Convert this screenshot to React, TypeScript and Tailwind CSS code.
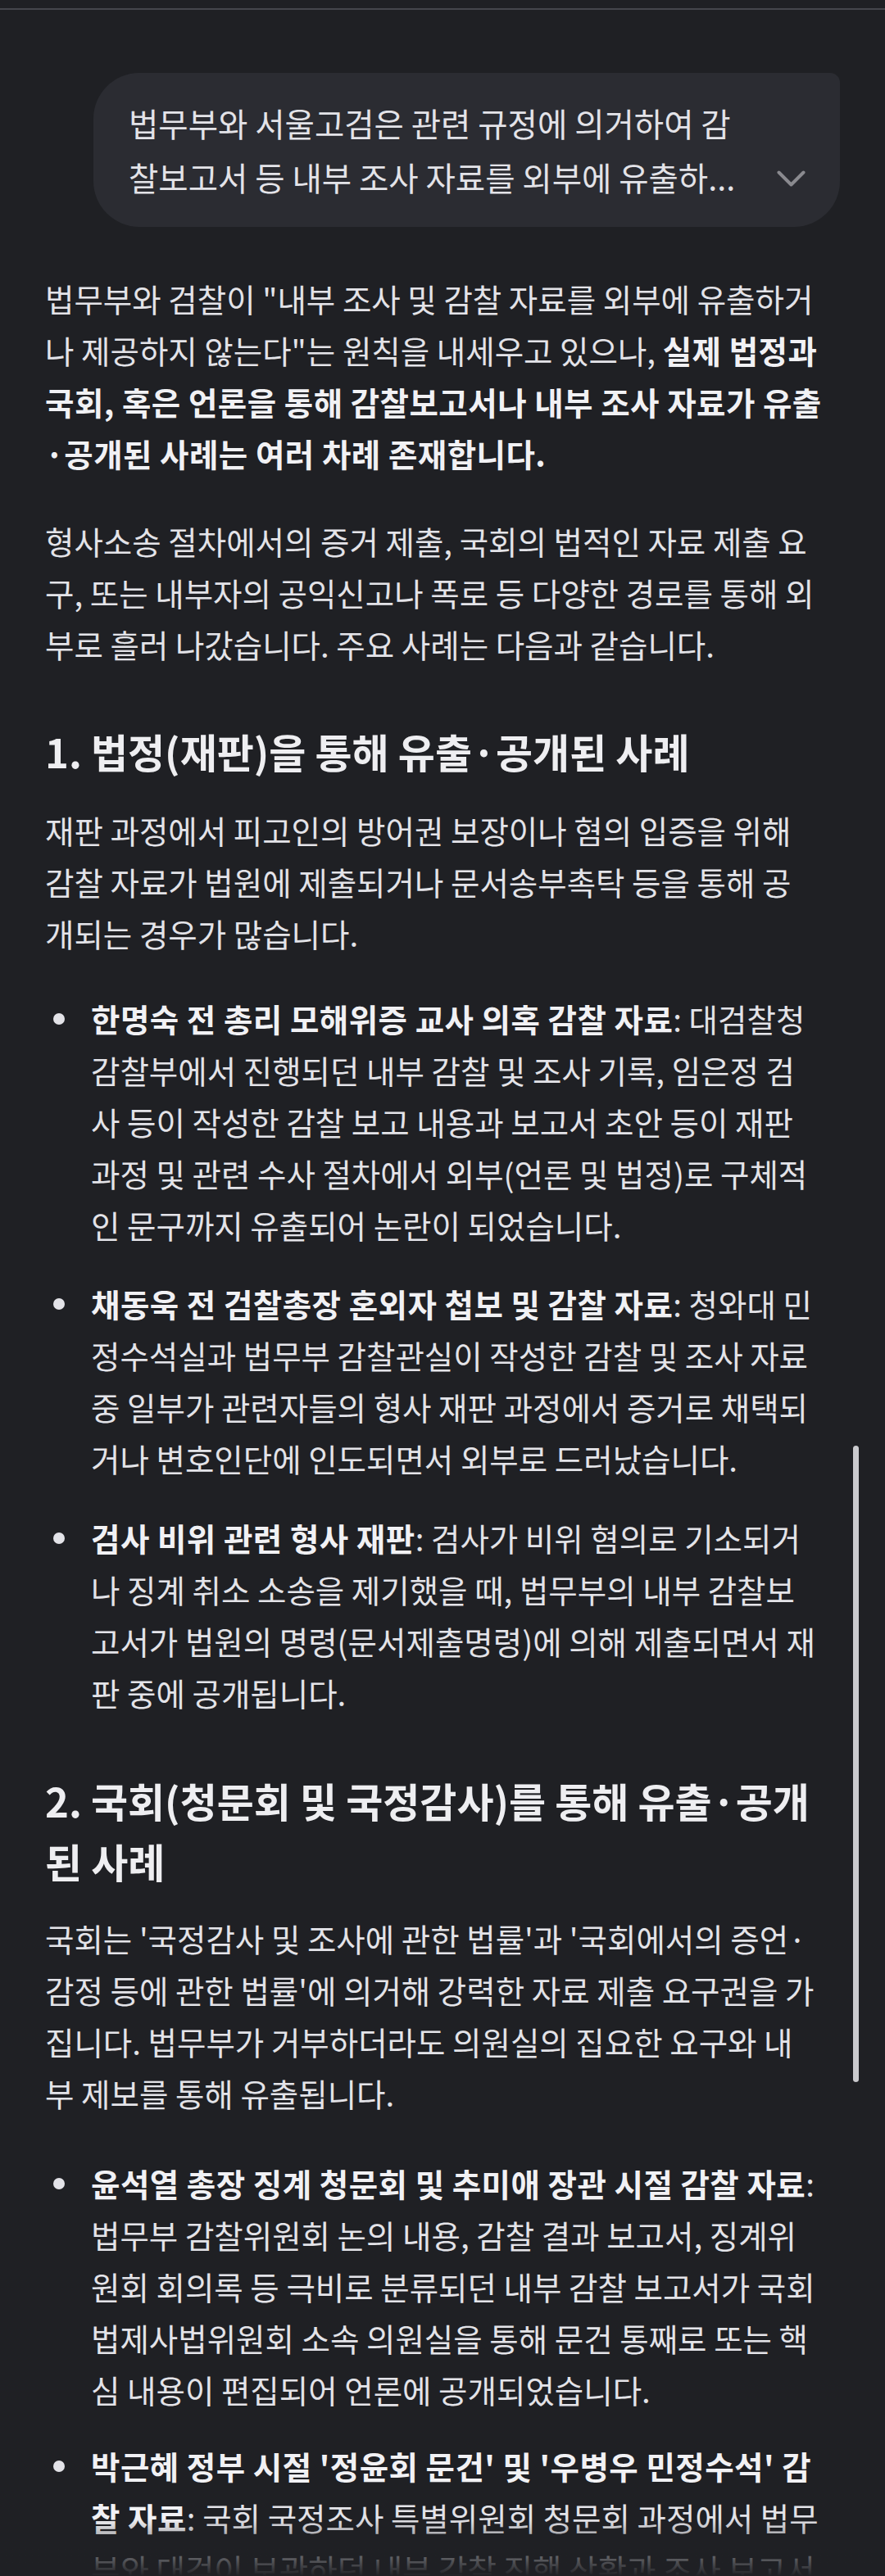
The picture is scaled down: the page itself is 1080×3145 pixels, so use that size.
import type { ReactNode } from "react";

function Bullet({ children, className = "" }: { children: ReactNode; className?: string }) {
  return (
    <li className={`flex ${className}`}>
      <span className="w-[56px] shrink-0 pl-[10px] pt-[25px]">
        <span className="block h-[14px] w-[14px] rounded-full bg-[#e3e3e8]" />
      </span>
      <p className="flex-1">{children}</p>
    </li>
  );
}

function B({ children }: { children: ReactNode }) {
  return <strong className="font-bold tracking-[0.012em] text-[#f1f1f4]">{children}</strong>;
}

export default function App() {
  return (
    <div className="relative h-[3145px] overflow-hidden bg-[#1f2024] font-['Noto_Sans_CJK_KR','Noto_Sans',sans-serif] text-[#e3e3e8]">
      <div className="pt-[10px]">
        <div className="h-[2px] bg-[#45464c]" />
      </div>

      <div className="whitespace-nowrap px-[55px] text-[38.5px] leading-[63px]">
        {/* user prompt bubble */}
        <div className="mt-[77px] flex justify-end">
          <div className="flex w-[911px] items-end rounded-[56px] rounded-tr-[12px] bg-[#2b2c32] py-[28px] pl-[43px] pr-[42px]">
            <p className="flex-1 text-[39.5px] leading-[66px]">
              법무부와 서울고검은 관련 규정에 의거하여 감
              <br />
              찰보고서 등 내부 조사 자료를 외부에 유출하...
            </p>
            <svg width="35" height="20" viewBox="0 0 35 20" className="mb-[21px] shrink-0">
              <polyline
                points="2.5,2.5 17.5,17.5 32.5,2.5"
                fill="none"
                stroke="#8a8a8f"
                strokeWidth="4"
                strokeLinecap="round"
                strokeLinejoin="round"
              />
            </svg>
          </div>
        </div>

        <p className="mt-[56px]">
          법무부와 검찰이 "내부 조사 및 감찰 자료를 외부에 유출하거
          <br />
          나 제공하지 않는다"는 원칙을 내세우고 있으나, <B>실제 법정과</B>
          <br />
          <B>국회, 혹은 언론을 통해 감찰보고서나 내부 조사 자료가 유출</B>
          <br />
          <B>·공개된 사례는 여러 차례 존재합니다.</B>
        </p>

        <p className="mt-[44px]">
          형사소송 절차에서의 증거 제출, 국회의 법적인 자료 제출 요
          <br />
          구, 또는 내부자의 공익신고나 폭로 등 다양한 경로를 통해 외
          <br />
          부로 흘러 나갔습니다. 주요 사례는 다음과 같습니다.
        </p>

        <h2 className="mt-[62px] text-[49px] font-bold leading-[74px] text-[#eeeef1]">
          1. 법정(재판)을 통해 유출·공개된 사례
        </h2>

        <p className="mt-[28px]">
          재판 과정에서 피고인의 방어권 보장이나 혐의 입증을 위해
          <br />
          감찰 자료가 법원에 제출되거나 문서송부촉탁 등을 통해 공
          <br />
          개되는 경우가 많습니다.
        </p>

        <ul className="mt-[41px]">
          <Bullet>
            <B>한명숙 전 총리 모해위증 교사 의혹 감찰 자료</B>: 대검찰청
            <br />
            감찰부에서 진행되던 내부 감찰 및 조사 기록, 임은정 검
            <br />
            사 등이 작성한 감찰 보고 내용과 보고서 초안 등이 재판
            <br />
            과정 및 관련 수사 절차에서 외부(언론 및 법정)로 구체적
            <br />
            인 문구까지 유출되어 논란이 되었습니다.
          </Bullet>
          <Bullet className="mt-[33px]">
            <B>채동욱 전 검찰총장 혼외자 첩보 및 감찰 자료</B>: 청와대 민
            <br />
            정수석실과 법무부 감찰관실이 작성한 감찰 및 조사 자료
            <br />
            중 일부가 관련자들의 형사 재판 과정에서 증거로 채택되
            <br />
            거나 변호인단에 인도되면서 외부로 드러났습니다.
          </Bullet>
          <Bullet className="mt-[34px]">
            <B>검사 비위 관련 형사 재판</B>: 검사가 비위 혐의로 기소되거
            <br />
            나 징계 취소 소송을 제기했을 때, 법무부의 내부 감찰보
            <br />
            고서가 법원의 명령(문서제출명령)에 의해 제출되면서 재
            <br />
            판 중에 공개됩니다.
          </Bullet>
        </ul>

        <h2 className="mt-[63px] text-[49px] font-bold leading-[74px] text-[#eeeef1]">
          2. 국회(청문회 및 국정감사)를 통해 유출·공개
          <br />된 사례
        </h2>

        <p className="mt-[26px]">
          국회는 '국정감사 및 조사에 관한 법률'과 '국회에서의 증언·
          <br />
          감정 등에 관한 법률'에 의거해 강력한 자료 제출 요구권을 가
          <br />
          집니다. 법무부가 거부하더라도 의원실의 집요한 요구와 내
          <br />
          부 제보를 통해 유출됩니다.
        </p>

        <ul className="mt-[47px]">
          <Bullet>
            <B>윤석열 총장 징계 청문회 및 추미애 장관 시절 감찰 자료</B>:
            <br />
            법무부 감찰위원회 논의 내용, 감찰 결과 보고서, 징계위
            <br />
            원회 회의록 등 극비로 분류되던 내부 감찰 보고서가 국회
            <br />
            법제사법위원회 소속 의원실을 통해 문건 통째로 또는 핵
            <br />
            심 내용이 편집되어 언론에 공개되었습니다.
          </Bullet>
          <Bullet className="mt-[30px]">
            <B>박근혜 정부 시절 '정윤회 문건' 및 '우병우 민정수석' 감</B>
            <br />
            <B>찰 자료</B>: 국회 국정조사 특별위원회 청문회 과정에서 법무
            <br />
            부와 대검이 보관하던 내부 감찰 진행 상황과 조사 보고서
            <br />
            등이 제출되었습니다.
          </Bullet>
        </ul>
      </div>

      {/* scroll thumb */}
      <div className="absolute left-[1041px] top-[1765px] h-[777px] w-[7px] rounded-full bg-[#cacace]" />

      {/* bottom fade */}
      <div className="absolute inset-x-0 bottom-0 h-[70px] bg-linear-to-b from-[#1f2024]/0 to-[#1f2024]" />
    </div>
  );
}
